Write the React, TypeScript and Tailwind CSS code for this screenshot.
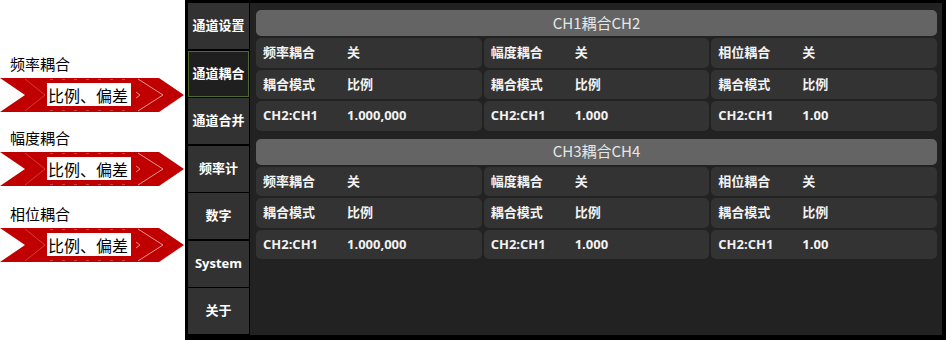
const cjk = '"Noto Sans CJK SC", "Noto Sans", sans-serif';
const ui = '"Open Sans", "Noto Sans CJK SC", sans-serif';

const tabs = ['通道设置', '通道耦合', '通道合并', '频率计', '数字', 'System', '关于'];

const sideLabels = ['频率耦合', '幅度耦合', '相位耦合'];

type Block = {
  title: string;
  rows: [string, string][][];
};

const blocks: Block[] = [
  {
    title: 'CH1耦合CH2',
    rows: [
      [['频率耦合', '关'], ['幅度耦合', '关'], ['相位耦合', '关']],
      [['耦合模式', '比例'], ['耦合模式', '比例'], ['耦合模式', '比例']],
      [['CH2:CH1', '1.000,000'], ['CH2:CH1', '1.000'], ['CH2:CH1', '1.00']],
    ],
  },
  {
    title: 'CH3耦合CH4',
    rows: [
      [['频率耦合', '关'], ['幅度耦合', '关'], ['相位耦合', '关']],
      [['耦合模式', '比例'], ['耦合模式', '比例'], ['耦合模式', '比例']],
      [['CH2:CH1', '1.000,000'], ['CH2:CH1', '1.000'], ['CH2:CH1', '1.00']],
    ],
  },
];

function Banner() {
  return (
    <div className="relative h-[34px] w-[185px]">
      <svg width="185" height="34" viewBox="0 0 185 34" className="absolute left-0 top-0">
        <polygon points="0,0 159,0 184,17 159,34 0,34 25,17" fill="#c00000" />
        <polyline points="25,1 45,17 25,33" fill="none" stroke="#ffffff" strokeOpacity="0.3" strokeWidth="0.8" />
        <polyline points="138,1 163,17 138,33" fill="none" stroke="#ffffff" strokeOpacity="0.75" strokeWidth="0.8" />
        <polyline points="136,14 140,17 136,20" fill="none" stroke="#f4b0b0" strokeWidth="0.8" />
        <line x1="50" y1="1.5" x2="130" y2="1.5" stroke="#ffffff" strokeOpacity="0.25" strokeDasharray="3 9" />
        <line x1="50" y1="32.5" x2="130" y2="32.5" stroke="#ffffff" strokeOpacity="0.25" strokeDasharray="3 9" />
      </svg>
      <div className="absolute left-[47px] top-[5px] flex h-[23px] w-[84px] items-center bg-white pl-[1px]">
        <span className="text-[16px] leading-none text-black" style={{ fontFamily: cjk }}>
          比例、偏差
        </span>
      </div>
    </div>
  );
}

export default function App() {
  return (
    <div className="flex h-[340px] w-[946px] bg-white">
      <div className="flex w-[185px] flex-col pt-[54px]">
        {sideLabels.map((label, i) => (
          <div key={label} className={i === 0 ? '' : i === 1 ? 'mt-[16px]' : 'mt-[18px]'}>
            <div className="h-[20px] pl-[10px] text-[15px] leading-[20px] text-black" style={{ fontFamily: cjk }}>
              {label}
            </div>
            <div className="mt-[4px]">
              <Banner />
            </div>
          </div>
        ))}
      </div>

      <div className="flex flex-1 gap-[1px] bg-black pb-[5px] pl-[3px] pr-[4px] pt-[3px]">
        <div className="flex w-[61px] flex-col gap-[1.5px]">
          {tabs.map((t, i) => (
            <div
              key={t}
              className={`flex h-[46px] items-center justify-center text-[13px] font-bold text-white ${
                i === 1 ? 'border border-[#4e6b2c] bg-[#1f1f1f]' : 'bg-[#323232]'
              }`}
              style={{ fontFamily: ui }}
            >
              {t}
            </div>
          ))}
        </div>

        <div className="flex flex-1 flex-col gap-[8px] bg-[#222222] pl-[6px] pr-[5px] pt-[7px]">
          {blocks.map((b) => (
            <div key={b.title} className="flex flex-col gap-[2px]">
              <div
                className="flex h-[26px] items-center justify-center rounded-[5px] bg-[#646464] text-[15px] text-[#e6e6e6]"
                style={{ fontFamily: cjk }}
              >
                {b.title}
              </div>
              {b.rows.map((row, ri) => (
                <div key={ri} className="grid grid-cols-3 gap-[2px]">
                  {row.map(([label, value], ci) => (
                    <div
                      key={ci}
                      className="flex h-[29.5px] items-center rounded-[5px] bg-[#333333] pl-[7px] text-[13px] font-bold text-[#f2f2f2]"
                      style={{ fontFamily: ui }}
                    >
                      <span className="w-[84px]">{label}</span>
                      <span>{value}</span>
                    </div>
                  ))}
                </div>
              ))}
            </div>
          ))}
        </div>
      </div>
    </div>
  );
}
